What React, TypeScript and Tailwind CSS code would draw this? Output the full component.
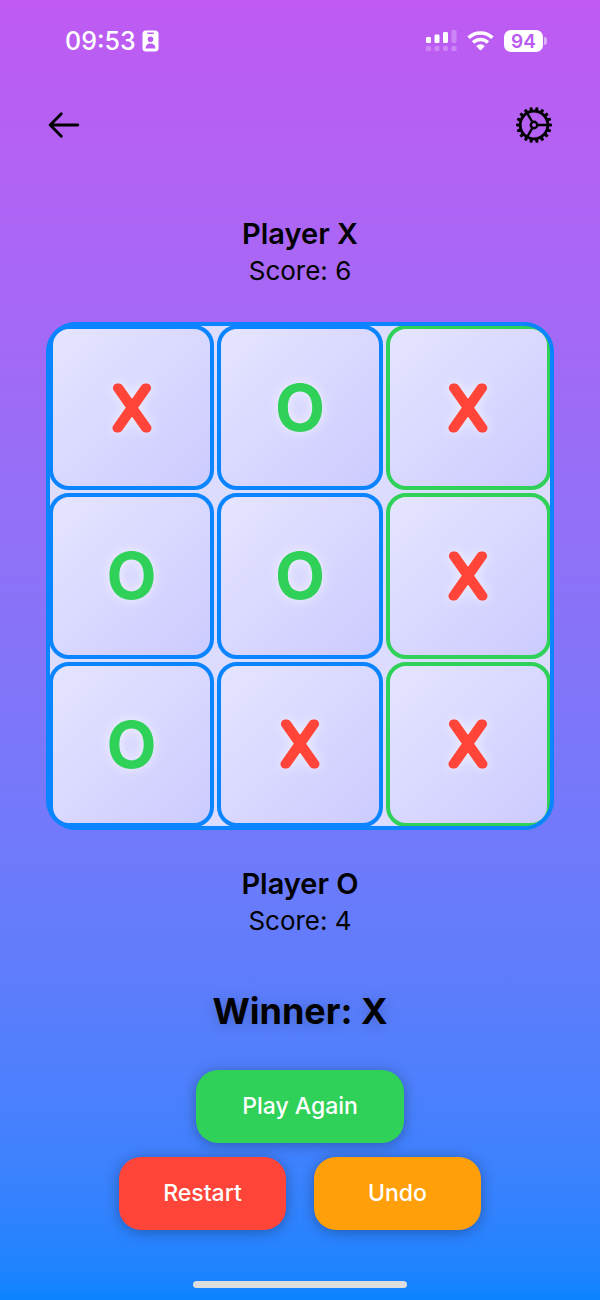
import clsx from "clsx";
import React from "react";

type Mark = "X" | "O";

const BOARD: Mark[] = ["X", "O", "X", "O", "O", "X", "O", "X", "X"];
const WINNING_LINE = [2, 5, 8];

function StatusBar() {
	return (
		<div className="flex h-[82px] items-center justify-between pl-[65px] pr-[53px] text-white">
			<div className="flex items-center gap-[6px]">
				<span className="text-[25px] font-medium leading-8">09:53</span>
				<svg width="17" height="22" viewBox="0 0 17 22" aria-hidden="true">
					<rect x="0.5" y="0.5" width="16" height="21" rx="3.5" fill="#fff" />
					<rect x="5" y="2.5" width="7" height="1.6" rx="0.8" fill="#bb5af2" />
					<circle cx="8.5" cy="9.3" r="2.8" fill="#bb5af2" />
					<path d="M3.6 18.4c0-3.4 2.2-5 4.9-5s4.9 1.6 4.9 5z" fill="#bb5af2" />
				</svg>
			</div>
			<div className="flex items-center gap-[10px]">
				<svg width="31" height="22" viewBox="0 0 31 22" fill="#fff" aria-hidden="true">
					<rect x="0" y="7" width="5" height="6" rx="1.3" />
					<rect x="8.5" y="4.5" width="5" height="8.5" rx="1.3" />
					<rect x="17" y="2" width="5" height="11" rx="1.3" />
					<g opacity="0.25">
						<rect x="25.5" y="0" width="5" height="13" rx="1.3" />
						<rect x="0" y="16" width="5" height="5" rx="1.5" />
						<rect x="8.5" y="16" width="5" height="5" rx="1.5" />
						<rect x="17" y="16" width="5" height="5" rx="1.5" />
						<rect x="25.5" y="16" width="5" height="5" rx="1.5" />
					</g>
				</svg>
				<svg width="27" height="20" viewBox="0 0 27 20" fill="none" aria-hidden="true">
					<path d="M1.6 6.8a17 17 0 0 1 23.8 0" stroke="#fff" strokeWidth="3.6" />
					<path d="M6.1 11.5a10.6 10.6 0 0 1 14.8 0" stroke="#fff" strokeWidth="3.6" />
					<path d="M9.2 15.1a6.2 6.2 0 0 1 8.6 0l-3.6 3.8a1 1 0 0 1-1.4 0z" fill="#fff" />
				</svg>
				<div className="flex items-center gap-px">
					<span className="flex h-[22px] w-[39px] items-center justify-center rounded-[7px] bg-white text-[19px] font-semibold leading-none text-[#b75bf2]">
						94
					</span>
					<span className="h-[8px] w-[3px] rounded-r-full bg-white/50" />
				</div>
			</div>
		</div>
	);
}

function ArrowIcon() {
	return (
		<svg width="32" height="28" viewBox="0 0 32 28" fill="none" stroke="#000" strokeWidth="2.9" strokeLinecap="round" strokeLinejoin="round">
			<path d="M13.3 2.8 2.2 14l11.1 11.2M2.2 14h27.6" />
		</svg>
	);
}

function GearIcon() {
	return (
		<svg width="36" height="36" viewBox="-18 -18 36 36" fill="none" stroke="#000">
			{Array.from({ length: 18 }, (_, i) => (
				<path key={i} d="M-1.8 -14.5 -1.3 -17.9H1.3L1.8 -14.5z" fill="#000" stroke="none" transform={`rotate(${i * 20 + 10})`} />
			))}
			<circle r="13.8" strokeWidth="2.8" />
			<circle r="3.2" strokeWidth="2.4" />
			<path d="M4 0H13M-2 -3.5-6.8 -11.8M-2 3.5-6.8 11.8" strokeWidth="2.4" />
		</svg>
	);
}

function PlayerScore({ name, score }: { name: string; score: number }) {
	return (
		<div className="text-center text-black">
			<h2 className="text-[29px] font-semibold leading-[38px]">{name}</h2>
			<p className="text-[26px] leading-9">Score: {score}</p>
		</div>
	);
}

function Cell({ mark, winning, index }: { mark: Mark; winning: boolean; index: number }) {
	return (
		<button
			aria-label={`Cell ${index + 1}: ${mark}`}
			className={clsx(
				"flex aspect-square items-center justify-center rounded-[20px] border-4 bg-linear-to-br from-[#e6e5ff] to-[#cccbff]",
				winning ? "border-[#30d158]" : "border-[#0a84ff]",
			)}
		>
			{mark === "X" ? (
				<svg viewBox="0 0 64 64" className="size-16 overflow-visible drop-shadow-[0_0_6px_rgba(255,255,255,0.7)]">
					<text
						x="32"
						y="52"
						textAnchor="middle"
						className="fill-[#ff453a] stroke-[#ff453a] font-[Inter] text-[54px] font-thin"
						strokeWidth="9"
						strokeLinejoin="round"
					>
						X
					</text>
				</svg>
			) : (
				<span className="text-[65px] font-bold leading-none text-[#30d158] drop-shadow-[0_0_6px_rgba(255,255,255,0.7)]">O</span>
			)}
		</button>
	);
}

function ActionButton({ children, className }: { children: React.ReactNode; className: string }) {
	return (
		<button
			className={clsx(
				"h-[73px] rounded-[22px] text-[23px] font-medium text-white shadow-[0_2px_14px_rgba(0,0,0,0.3)]",
				className,
			)}
		>
			{children}
		</button>
	);
}

export default function App() {
	return (
		<div className="flex min-h-screen flex-col bg-linear-to-b from-[#bf5af2] to-[#0a84ff] font-[Inter,'Liberation_Sans',sans-serif]">
			<StatusBar />
			<header className="flex h-[86px] items-center justify-between px-12">
				<button aria-label="Back">
					<ArrowIcon />
				</button>
				<button aria-label="Settings">
					<GearIcon />
				</button>
			</header>
			<main className="flex flex-col pt-[47px]">
				<PlayerScore name="Player X" score={6} />
				<div className="relative mx-[46px] mt-[33px] mb-[35px] overflow-hidden rounded-[30px] bg-[#0a84ff] p-[3px]">
					<div className="grid grid-cols-3 gap-[3px] rounded-[27px] bg-[#dcdcff]">
						{BOARD.map((mark, idx) => (
							<Cell key={idx} index={idx} mark={mark} winning={WINNING_LINE.includes(idx)} />
						))}
					</div>
					<div className="pointer-events-none absolute inset-0 rounded-[30px] border-4 border-[#0a84ff]" />
				</div>
				<PlayerScore name="Player O" score={4} />
				<h1 className="mt-[46px] text-center text-[36px] font-bold leading-[52px] text-black text-shadow-[0_2px_14px_rgba(0,0,0,0.2)]">
					Winner: X
				</h1>
				<div className="mt-[33px] flex flex-col items-center gap-[14px]">
					<ActionButton className="w-[208px] bg-[#30d158]">Play Again</ActionButton>
					<div className="flex gap-7">
						<ActionButton className="w-[167px] bg-[#ff453a]">Restart</ActionButton>
						<ActionButton className="w-[167px] bg-[#ff9f0a]">Undo</ActionButton>
					</div>
				</div>
			</main>
			<footer className="mt-auto flex justify-center pb-3">
				<div className="h-[7px] w-[214px] rounded-full bg-[#dddddd]" />
			</footer>
		</div>
	);
}
